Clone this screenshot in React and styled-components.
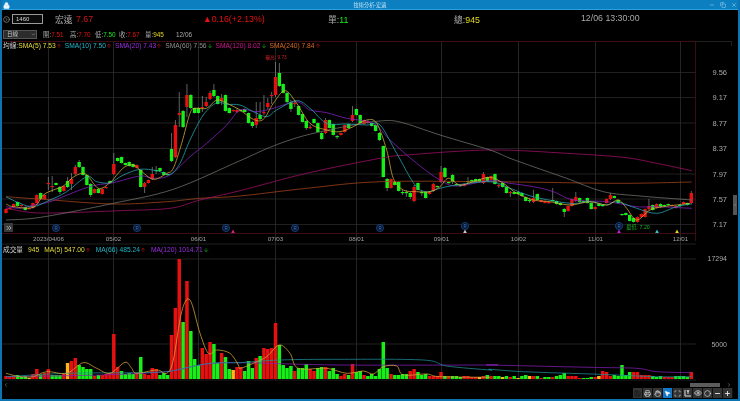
import React from 'react';
import styled, { createGlobalStyle } from 'styled-components';
import { Lock, Minus, Copy, X, CircleChevronRight, Printer, Hand, MousePointer2, Scan, Eye, Circle, Plus, Save, ChevronsRight, ChevronLeft, ChevronRight, ChevronDown, ArrowUp, ArrowDown } from 'lucide-react';

const Global = createGlobalStyle`
  html, body { margin: 0; padding: 0; background: #000; }
  #root { width: 740px; height: 401px; overflow: hidden; }
`;

const FONT = '"Liberation Sans", "Noto Sans CJK TC", sans-serif';
const RED = '#e5100f';
const GREEN = '#16ef18';
const ORANGE = '#ffb81c';
const C = { r: RED, g: GREEN, o: ORANGE };

const Win = styled.div`
  width: 740px; height: 401px; box-sizing: border-box; background: #000;
  border: 2px solid #0c74b0; border-top: 0;
  display: flex; flex-direction: column; font-family: ${FONT}; color: #c9c9c9; overflow: hidden;
  filter: blur(0.3px);
`;
const TitleBar = styled.div`
  height: 10px; margin: 0 -2px; padding: 0 3px; flex: none; background: #0c7fc1;
  display: grid; grid-template-columns: 1fr auto 1fr; align-items: center; color: #cfe8f7;
  border-bottom: 0.5px solid #2ba0e0; box-sizing: border-box;
`;
const TitleText = styled.span`font-size: 5.2px; line-height: 10px; color: #bfe3f8;`;
const TitleBtns = styled.div`display: flex; gap: 5px; align-items: center; justify-content: flex-end; color: #a8d6f2;`;
const Header = styled.div`
  height: 17px; flex: none; display: grid; align-items: center;
  grid-template-columns: 53px 21px 127px 125px 126px 1fr;
  font-size: 8.8px; color: #a8a8a8; padding-top: 1px; box-sizing: border-box;
`;
const Code = styled.div`display: flex; align-items: center; gap: 2px; padding-left: 1px; color: #aaa;`;
const CodeBox = styled.div`
  width: 31px; height: 10px; box-sizing: border-box; border: 1px solid #9a9a9a; background: #0a0a0a;
  font-size: 6px; line-height: 8px; padding-left: 3px; color: #d5d5d5;
`;
const Val = styled.span`color: ${p => p.$c || 'inherit'}; white-space: nowrap;`;
const TotalCell = styled.div`display: flex; white-space: nowrap;`;
const TimeText = styled.span`margin-left: 101px;`;
const InfoRow = styled.div`
  height: 14px; flex: none; display: flex; align-items: center; font-size: 6.4px; color: #aaa;
`;
const Select = styled.div`
  width: 34px; height: 9px; box-sizing: border-box; margin: 0 6px 0 1px; background: #2c2c2c; border: 0.5px solid #555;
  color: #ccc; font-size: 5.5px; line-height: 8px; padding-left: 3px;
  display: flex; justify-content: space-between; align-items: center;
`;
const Stat = styled.span`width: ${p => p.$w}px; flex: none; white-space: nowrap;`;
const Stage = styled.div`position: relative; height: 340px; flex: none;`;
const ChartSvg = styled.svg`display: block; width: 736px; height: 340px;`;
const Legend = styled.div`
  position: absolute; left: 1px; top: ${p => p.$top}px; display: flex; gap: ${p => p.$gap}px;
  font-size: 6.7px; line-height: 9px; white-space: nowrap;
`;
const LegendItem = styled.span`color: ${p => p.$c}; display: inline-flex; align-items: center;`;
const Expand = styled.div`
  position: absolute; left: 2px; top: 182px; width: 9px; height: 9px; background: #3a3a3a; color: #ddd;
  display: flex; align-items: center; justify-content: center;
`;
const SideHandle = styled.div`
  position: absolute; right: 1px; top: 154px; width: 4px; height: 20px; background: #555; color: #ccc;
  display: flex; align-items: center; justify-content: center;
`;
const Bottom = styled.div`flex: 1; min-height: 0; display: flex; flex-direction: column; align-items: flex-end;`;
const ScrollRow = styled.div`
  width: 100%; height: 7px; flex: none; display: flex; align-items: center; justify-content: space-between; color: #999;
  padding: 0 6px 0 1px; box-sizing: border-box;
`;
const Thumb = styled.div`width: 30px; height: 4px; background: #5c5c5c; margin-left: auto; margin-right: 6px;`;
const Tools = styled.div`display: flex; padding-right: 5px; gap: 0;`;
const Tool = styled.div`
  width: 10px; height: 10px; display: flex; align-items: center; justify-content: center;
  background: ${p => p.$on ? '#1478c8' : '#333'}; color: ${p => p.$dim ? '#111' : '#eee'};
  border-right: 0.5px solid #111; box-sizing: border-box;
`;

const B = `209,213,r;208,209,r;204,207,r;202,206,g;205,206,r;207,210,g;208,209,r;203,208,r;195,203,r;193,199,g;195,199,r;183,184,r,177,190;186,187,r,176,192;183,185,g;187,192,g,186,194;186,191,r;181,187,g,177,188;179,184,r,173,190;167,174,r,165,175;162,167,g,160,168;167,175,g;175,185,g;184,195,g,183,197;189,193,r;189,193,g;189,194,r;187,188,r;181,183,g;164,174,r,153,175;158,161,g;157,163,g;163,165,g;162,166,g;164,167,g;165,168,r;170,187,g;183,187,r,182,193;180,183,r;174,179,r,167,180;170,171,g,166,174;168,171,g;172,175,g;174,175,g;149,161,g,133,162;125,157,r,120,158;113,115,r,92,127;111,127,g,110,128;95,107,r,84,117;95,108,g,94,109;108,113,g;108,113,g;107,108,r,96,112;102,106,r,97,107;93,99,r,91,100;90,96,g,84,97;96,104,g;98,101,r,94,105;95,111,g;108,113,g;110,111,r;110,112,r,108,113;110,111,g;109,112,g;113,123,g;122,126,g,121,128;118,125,r,102,128;115,119,g,102,120;112,113,r,95,115;103,107,r,98,109;95,96,r,92,104;77,95,r,62,97;73,86,g,63,87;84,93,g;93,102,g,92,103;102,109,g,100,112;103,104,r,100,107;106,115,g;114,122,g;121,128,g,120,130;127,128,r,125,129;119,123,g;123,132,g;133,139,g,132,140;120,133,r,118,134;120,128,g;124,135,g;136,137,g,135,139;133,135,r;125,132,r;124,128,g;115,121,r,106,122;109,115,g;115,123,g;120,124,r;121,123,r;123,126,g;125,131,g;133,140,g,132,141;146,177,g;179,188,g,178,191;179,188,r;182,185,g;182,191,g;192,193,g,190,195;192,193,g,190,197;193,197,g,192,199;187,201,r,185,202;183,190,g;192,193,g,190,196;192,198,g;192,194,r;184,191,r,183,192;186,187,g;172,182,r,166,183;168,177,g,167,178;182,183,g;175,182,g,174,184;184,185,g;185,186,g;184,186,r;181,182,g,177,184;180,182,g;179,182,g;179,182,g;174,183,r,172,184;177,181,g;176,180,r;174,184,g;185,186,r,184,188;183,187,g;187,193,g;192,193,r,191,197;192,194,g;192,194,g;193,196,g;197,201,g;200,201,g,198,203;198,202,r,190,203;194,200,g;200,202,r;201,203,r;202,203,r;200,201,g,188,201;201,204,g;203,205,g;209,212,g,208,217;206,211,r;199,206,r;197,201,r,192,202;198,202,g;201,202,g;198,203,g;203,209,g;207,209,r;204,206,g;205,206,g;199,203,r;195,199,r,193,200;196,198,g;200,203,g;214,215,g;213,215,g;215,221,g;218,222,g;217,222,r;214,217,r;209,217,r;206,209,r,199,210;205,210,g;204,208,r;204,207,g;205,206,g;204,205,g;205,206,r;206,208,r;205,206,g;202,204,r;203,205,g;193,203,r,191,204`
  .split(';').map(s => s.split(','));

const V = `3r3r3r4g2g3g1o5r10r4g6r10r4g4g4g5r16o18r21r14g12g10g10g3r4g4r5r6r45r12r8g5g6g5g6r22g5r4r11r10r4g6g4g44r71r120r57g98r48g20g14g31r25r37r35g16g26r22g10g9o12r12r8g18g11g21r23g31r30r31r56r34g14g11g13g8r11g11g15g10r8r11g12g12r8g11g5g3r5r4g15r7g8g4r3g5g3g10g37g11g5r4g4g5g5g8r10r7g4g5g3r3r3r7r3g3r3g3g2g3r3r2r2r2o3r4g3r3g3g2o3g2r3g1o3g4g3o3r3g1r2g2g2r3g4g6g3r3r3r1r1g1g2g2r3o8r7r3r4g3g14g4g7g7r7r4r4r4r3g2g3g2r2r2r3g3g3g2g7r`
  .match(/\d+[rgo]/g).map(s => [parseInt(s), s.slice(-1)]);

const X0 = 6, STEP = 3.85;
const xAt = i => X0 + STEP * i;
const grids = [48.5, 113.5, 198.5, 275.5, 356.5, 441.5, 518.5, 595.5, 680.5];
const priceGrid = [[72.5, '9.56'], [97.5, '9.17'], [123, '8.77'], [148.5, '8.37'], [174, '7.97'], [199, '7.57'], [224.5, '7.17']];
const dates = [[48.5, '2023/04/06'], [113.5, '05/02'], [198.5, '06/01'], [275.5, '07/03'], [356.5, '08/01'], [441.5, '09/01'], [518.5, '10/02'], [595.5, '11/01'], [680.5, '12/01']];

const mapZ = (ox, oy) => a => a.map(([x, y]) => [ox + x / 3, oy + y / 3]);
const zA = mapZ(0, 60), zB = mapZ(240, 60), zC = mapZ(490, 60);
const zV = mapZ(0, 230), zW = mapZ(240, 300), zX = mapZ(490, 330);
const join = (a, b, c) => [...a.filter(p => p[0] < b[0][0]), ...b.filter(p => p[0] < c[0][0]), ...c];

const smooth = pts => {
  let d = `M${pts[0][0].toFixed(1)} ${pts[0][1].toFixed(1)}`;
  for (let i = 0; i < pts.length - 1; i++) {
    const p0 = pts[i - 1] || pts[i], p1 = pts[i], p2 = pts[i + 1], p3 = pts[i + 2] || p2;
    const c1 = [p1[0] + (p2[0] - p0[0]) / 6, p1[1] + (p2[1] - p0[1]) / 6];
    const c2 = [p2[0] - (p3[0] - p1[0]) / 6, p2[1] - (p3[1] - p1[1]) / 6];
    d += `C${c1[0].toFixed(1)} ${c1[1].toFixed(1)} ${c2[0].toFixed(1)} ${c2[1].toFixed(1)} ${p2[0].toFixed(1)} ${p2[1].toFixed(1)}`;
  }
  return d;
};

const priceLines = [
  ['#a8461c', join(zA([[18,410],[130,418],[340,432],[500,425],[600,415],[750,405]]), zB([[0,408],[200,385],[420,365],[750,365]]), zC([[0,365],[150,367],[400,370],[605,366]]))],
  ['#a5106a', join(zA([[18,445],[100,458],[200,458],[360,452],[510,445],[600,420],[750,385]]), zB([[0,392],[200,340],[420,295],[500,285],[750,275]]), zC([[0,270],[230,280],[400,292],[500,310],[605,332]]))],
  ['#74746e', join(zA([[18,480],[100,475],[200,458],[340,430],[520,388],[750,290]]), zB([[0,302],[100,258],[200,225],[340,195],[420,183],[480,186],[600,225],[750,270]]), zC([[0,270],[60,295],[130,320],[230,355],[340,395],[450,408],[605,420]]))],
  ['#8a22c8', join(zA([[18,440],[60,445],[100,435],[150,425],[240,390],[290,375],[340,368],[420,348],[460,355],[510,345],[570,290],[620,250],[680,195],[740,150]]), zB([[0,150],[50,155],[100,145],[170,125],[210,150],[260,158],[320,175],[400,190],[450,240],[530,310],[600,360],[650,378],[750,375]]), zC([[0,362],[60,370],[130,380],[190,395],[250,420],[350,425],[440,440],[500,440],[605,445]]))],
  ['#27a9b8', join(zA([[18,410],[60,430],[100,440],[150,420],[200,395],[260,350],[290,365],[330,368],[370,345],[420,328],[470,332],[510,343],[540,310],[570,240],[610,165],[650,128],[680,133],[720,135],[750,150]]), zB([[0,135],[40,155],[80,170],[110,150],[170,122],[210,145],[260,190],[320,192],[380,195],[420,195],[470,280],[525,375],[560,395],[600,385],[650,375],[750,368]]), zC([[0,365],[60,385],[130,410],[240,430],[300,425],[350,435],[380,425],[440,445],[500,460],[560,440],[605,432]]))],
  ['#d8b23a', join(zA([[18,432],[40,440],[100,442],[130,405],[160,390],[190,378],[225,348],[258,343],[295,385],[330,368],[350,345],[375,320],[400,315],[420,330],[460,358],[500,340],[520,325],[545,250],[570,160],[585,145],[620,145],[650,120],[680,130],[720,150],[750,160]]), zB([[0,150],[40,178],[70,178],[100,130],[135,92],[170,130],[210,190],[260,210],[300,215],[340,200],[380,180],[410,190],[440,270],[460,355],[490,390],[530,395],[570,395],[600,380],[625,355],[660,375],[700,365],[750,365]]), zC([[0,352],[40,370],[80,400],[130,420],[180,425],[240,435],[300,425],[350,435],[385,420],[410,445],[440,480],[480,450],[520,440],[600,430]]))],
];
const volLines = [
  ['#8420b8', [...zV([[18,440],[300,435],[500,425],[600,405],[710,398]]), ...zW([[300,195],[750,195]]), ...zX([[0,105],[300,112],[440,115],[500,125],[605,128]])]],
  ['#1f8d9c', [...zV([[18,440],[200,430],[400,428],[500,425],[550,415],[630,400],[710,398]]), ...zW([[0,188],[120,180],[300,178],[550,180],[620,198],[750,210]]), ...zX([[0,118],[100,125],[330,133],[500,140],[605,140]])]],
  ['#d9a838', [...zV([[18,430],[60,440],[100,440],[140,425],[200,430],[250,398],[290,415],[330,430],[375,397],[395,415],[410,430],[470,420],[500,430],[520,390],[545,245],[570,210],[600,310],[625,370],[650,360],[690,370],[715,405]]), ...zW([[0,205],[40,190],[80,170],[118,135],[150,160],[175,205],[260,205],[320,220],[370,213],[400,222],[430,200],[470,198],[490,225],[560,222],[600,230],[750,232]])]],
];

const Tri = ({ x, c }) => <polygon points={`${x - 1.8},233 ${x + 1.8},233 ${x},229.5`} fill={c} />;
const Rmark = ({ x, y }) => (
  <g>
    <circle cx={x} cy={y} r="3.6" fill="#07162e" stroke="#1c4f96" strokeWidth="0.7" />
    <text x={x} y={y + 1.6} fontSize="4.5" fill="#3f76c4" textAnchor="middle">R</text>
  </g>
);

const Arrow = ({ up }) => up
  ? <ArrowUp size={6} strokeWidth={2} color="#d8161a" />
  : <ArrowDown size={6} strokeWidth={2} color="#19c41e" />;

function Chart() {
  return (
    <ChartSvg viewBox="2 41 736 340" fontFamily={FONT}>
      <g stroke="#3d3d3d" strokeWidth="0.6">
        {grids.map(x => <line key={x} x1={x} x2={x} y1={41} y2={380} />)}
      </g>
      <g stroke="#2e2e2e" strokeWidth="0.7">
        {priceGrid.map(([y]) => <line key={y} x1={2} x2={696} y1={y} y2={y} />)}
        <line x1={2} x2={696} y1={244} y2={244} />
        <line x1={2} x2={696} y1={259} y2={259} />
        <line x1={2} x2={696} y1={344} y2={344} />
        <line x1={2} x2={696} y1={380} y2={380} />
        <line x1={696} x2={731.5} y1={41.5} y2={41.5} />
        <line x1={731.5} x2={731.5} y1={41.5} y2={46} />
      </g>
      <g stroke="#4a1018" strokeWidth="0.8">
        <line x1={2} x2={696} y1={41.5} y2={41.5} />
        <line x1={2} x2={696} y1={233.5} y2={233.5} />
        <line x1={695.5} x2={695.5} y1={41} y2={241} />
      </g>
      {priceGrid.map(([y, t]) => <text key={t} x={727} y={y + 2.8} fontSize="7.5" fill="#a8a8a8" textAnchor="end">{t}</text>)}
      <text x={727} y={261} fontSize="7" fill="#a8a8a8" textAnchor="end">17294</text>
      <text x={727} y={346.5} fontSize="7" fill="#a8a8a8" textAnchor="end">5000</text>
      {dates.map(([x, t]) => <text key={t} x={x} y={241} fontSize="6.2" fill="#a0a0a0" textAnchor="middle">{t}</text>)}

      {B.map((b, i) => {
        const x = xAt(i), t = +b[0], e = +b[1], wt = b[3] ? +b[3] : t - 0.5, wb = b[4] ? +b[4] : e + 0.5;
        return (
          <g key={i}>
            <line x1={x} x2={x} y1={wt} y2={wb} stroke="#8c8c8c" strokeWidth="0.7" />
            <rect x={x - 1.7} y={t} width="3.4" height={Math.max(e - t, 1.2)} fill={C[b[2]]} />
          </g>
        );
      })}
      {priceLines.map(([c, p]) => <path key={c} d={smooth(p)} fill="none" stroke={c} strokeWidth="0.75" />)}

      {V.map(([h, c], i) => <rect key={i} x={xAt(i) - 1.75} y={379 - h} width="3.5" height={h} fill={C[c]} />)}
      {volLines.map(([c, p]) => <path key={c} d={smooth(p)} fill="none" stroke={c} strokeWidth="0.75" />)}

      {[[56, 228], [137, 228], [226, 228], [295, 228], [380, 228], [465, 226], [619, 226]].map(([x, y]) => <Rmark key={x} x={x} y={y} />)}
      <Tri x={233} c="#e0208a" />
      <Tri x={465} c="#c8c8c8" />
      <Tri x={619} c="#c020d8" />
      <Tri x={657} c="#30c8d8" />
      <Tri x={677} c="#e8d820" />
      <text x={276} y={58.5} fontSize="4.8" fill="#c82020" textAnchor="middle">最高: 9.73</text>
      <text x={638} y={229} fontSize="5.2" fill="#18b820" textAnchor="middle">最低: 7.20</text>
    </ChartSvg>
  );
}

export default function App() {
  return (
    <>
      <Global />
      <Win>
        <TitleBar>
          <Lock size={7} fill="#e8f4fb" color="#e8f4fb" />
          <TitleText>技術分析-宏遠</TitleText>
          <TitleBtns>
            <Minus size={6} /><Copy size={6} /><X size={6} />
          </TitleBtns>
        </TitleBar>
        <Header>
          <Code><CircleChevronRight size={7} /><CodeBox>1460</CodeBox></Code>
          <Val>宏遠</Val>
          <Val $c="#c91818">7.67</Val>
          <Val $c={RED}>▲0.16(+2.13%)</Val>
          <Val>單:<Val $c={GREEN}>11</Val></Val>
          <TotalCell>
            <span>總:<Val $c="#e5d81e">945</Val></span>
            <TimeText>12/06 13:30:00</TimeText>
          </TotalCell>
        </Header>
        <InfoRow>
          <Select>日線<ChevronDown size={5} /></Select>
          <Stat $w={27}>開:<Val $c={RED}>7.51</Val></Stat>
          <Stat $w={25}>高:<Val $c={RED}>7.70</Val></Stat>
          <Stat $w={24}>低:<Val $c={GREEN}>7.50</Val></Stat>
          <Stat $w={26}>收:<Val $c={RED}>7.67</Val></Stat>
          <Stat $w={31}>量:<Val $c="#e5d81e">945</Val></Stat>
          <Stat $w={30}>12/06</Stat>
        </InfoRow>
        <Stage>
          <Chart />
          <Legend $top={0} $gap={3}>
            <LegendItem $c="#cfcfcf">均線:<Val $c="#e6dc3a">SMA(5) 7.53</Val><Arrow up /></LegendItem>
            <LegendItem $c="#1fb6c6">SMA(10) 7.50<Arrow up /></LegendItem>
            <LegendItem $c="#9a2ce0">SMA(20) 7.43<Arrow up /></LegendItem>
            <LegendItem $c="#8e8e8e">SMA(60) 7.56<Arrow /></LegendItem>
            <LegendItem $c="#d0148c">SMA(120) 8.02<Arrow /></LegendItem>
            <LegendItem $c="#d9681c">SMA(240) 7.84<Arrow up /></LegendItem>
          </Legend>
          <Expand><ChevronsRight size={8} /></Expand>
          <SideHandle><ChevronLeft size={4} /></SideHandle>
          <Legend $top={204} $gap={5}>
            <LegendItem $c="#cfcfcf">成交量</LegendItem>
            <LegendItem $c="#e6dc3a">945</LegendItem>
            <LegendItem $c="#e6dc3a">MA(5) 547.00<Arrow up /></LegendItem>
            <LegendItem $c="#1fb6c6">MA(66) 485.24<Arrow up /></LegendItem>
            <LegendItem $c="#9a2ce0">MA(120) 1014.71<Arrow /></LegendItem>
          </Legend>
        </Stage>
        <Bottom>
          <ScrollRow>
            <ChevronLeft size={6} />
            <Thumb />
            <ChevronRight size={6} />
          </ScrollRow>
          <Tools>
            <Tool $dim><Save size={7} /></Tool>
            <Tool><Printer size={7} /></Tool>
            <Tool><Hand size={7} /></Tool>
            <Tool $on><MousePointer2 size={7} fill="#fff" /></Tool>
            <Tool><Scan size={7} /></Tool>
            <Tool>
              <svg width="8" height="8" viewBox="0 0 8 8" fill="none" stroke="currentColor" strokeWidth="0.9">
                <path d="M1 1v6h6M3 1l1 2 1-2M4 3v2" />
              </svg>
            </Tool>
            <Tool><Eye size={8} /></Tool>
            <Tool><Circle size={7} /></Tool>
            <Tool><Minus size={7} strokeWidth={3} /></Tool>
            <Tool><Plus size={7} strokeWidth={3} /></Tool>
          </Tools>
        </Bottom>
      </Win>
    </>
  );
}
